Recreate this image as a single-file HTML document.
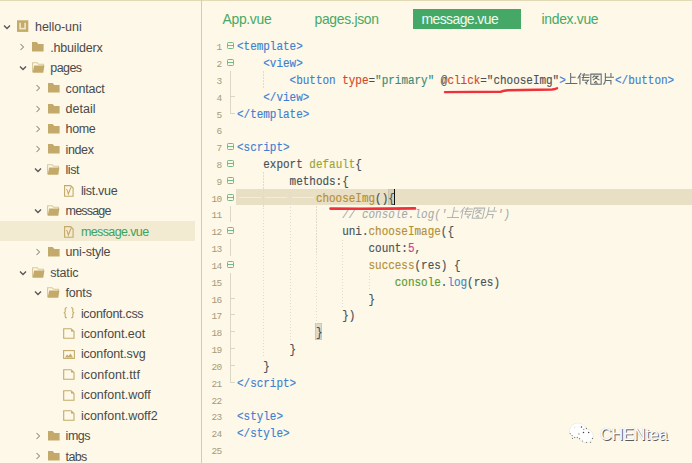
<!DOCTYPE html>
<html><head><meta charset="utf-8">
<style>
html,body{margin:0;padding:0;}
body{width:692px;height:463px;overflow:hidden;position:relative;background:#fdf8e7;}
.a{position:absolute;}
.st{position:absolute;font-family:"Liberation Sans",sans-serif;font-size:12.5px;line-height:20px;white-space:pre;letter-spacing:-0.2px;}
.ln{position:absolute;left:189.3px;width:32px;text-align:right;font-family:"Liberation Mono",monospace;font-size:9.5px;letter-spacing:-0.8px;line-height:16.83px;color:#a69a7c;}
.cl{position:absolute;-webkit-text-stroke:0.15px currentColor;font-family:"Liberation Mono",monospace;font-size:12.3px;line-height:16.83px;white-space:pre;transform:scaleX(0.8909);transform-origin:0 0;}
.it{font-style:italic;-webkit-text-stroke:0;}
.gd{position:absolute;width:1px;background:repeating-linear-gradient(to bottom,#e0dbca 0 1.5px,transparent 1.5px 3px);}
.tab{position:absolute;top:9px;height:20px;font-family:"Liberation Sans",sans-serif;font-size:13.9px;letter-spacing:-0.3px;line-height:20px;color:#48a866;white-space:pre;}
</style></head><body>
<div class="a" style="left:0;top:0;width:692px;height:1px;background:#e3d9b4"></div>
<div class="a" style="left:201px;top:0;width:1px;height:463px;background:#d8cda6"></div>
<div class="a" style="left:0;top:221px;width:195px;height:20px;background:#f2ead1"></div>
<div class="a" style="left:236px;top:189px;width:456px;height:16.4px;background:#e8dfc4"></div>
<div class="a" style="left:315px;top:323px;width:7px;height:17px;background:#dfdaca;border:1px solid #ccc8b6;box-sizing:border-box"></div>
<div class="a" style="left:387.8px;top:189px;width:7px;height:16.4px;background:#d8d1b7;border:1px solid #cdc7b0;box-sizing:border-box"></div>
<svg class="a" style="left:3.25px;top:23.20px" width="8" height="8"><path d="M1 2.5 L4 5.5 L7 2.5" fill="none" stroke="#555" stroke-width="1.3"/></svg>
<svg class="a" style="left:17.00px;top:20.20px" width="12" height="12"><rect x="0" y="0.3" width="11.3" height="11.6" fill="#c4aa6a"/><path d="M3.1 2.8 V8.7 H8.1 V2.8" fill="none" stroke="#efe4c4" stroke-width="1.7"/></svg>
<div class="st" style="left:35.00px;top:17.20px;color:#4a4a4a;letter-spacing:-0.075px">hello-uni</div>
<svg class="a" style="left:18.20px;top:43.15px" width="8" height="8"><path d="M2.5 1 L5.5 4 L2.5 7" fill="none" stroke="#928e7e" stroke-width="1.05"/></svg>
<svg class="a" style="left:32.00px;top:42.20px" width="12" height="10"><path d="M0 0 H4.6 L6.4 2 H11.6 V9.5 H0 Z" fill="#c4aa6a"/></svg>
<div class="st" style="left:50.30px;top:37.65px;color:#4a4a4a;letter-spacing:-0.200px">.hbuilderx</div>
<svg class="a" style="left:18.65px;top:64.10px" width="8" height="8"><path d="M1 2.5 L4 5.5 L7 2.5" fill="none" stroke="#555" stroke-width="1.3"/></svg>
<svg class="a" style="left:31.50px;top:62.10px" width="13" height="12"><path d="M0.6 10 V0.8 H5.2 L6.6 2.3 H11.4 V4" fill="none" stroke="#d9c99c" stroke-width="1.1"/><path d="M2.2 3.6 H12.4 L11.3 10.8 H0.6 Z" fill="#c4aa6a"/></svg>
<div class="st" style="left:50.30px;top:58.10px;color:#4a4a4a;letter-spacing:-0.575px">pages</div>
<svg class="a" style="left:33.70px;top:84.05px" width="8" height="8"><path d="M2.5 1 L5.5 4 L2.5 7" fill="none" stroke="#928e7e" stroke-width="1.05"/></svg>
<svg class="a" style="left:47.60px;top:83.10px" width="12" height="10"><path d="M0 0 H4.6 L6.4 2 H11.6 V9.5 H0 Z" fill="#c4aa6a"/></svg>
<div class="st" style="left:65.60px;top:78.55px;color:#4a4a4a;letter-spacing:-0.200px">contact</div>
<svg class="a" style="left:33.70px;top:104.50px" width="8" height="8"><path d="M2.5 1 L5.5 4 L2.5 7" fill="none" stroke="#928e7e" stroke-width="1.05"/></svg>
<svg class="a" style="left:47.60px;top:103.55px" width="12" height="10"><path d="M0 0 H4.6 L6.4 2 H11.6 V9.5 H0 Z" fill="#c4aa6a"/></svg>
<div class="st" style="left:65.60px;top:99.00px;color:#4a4a4a;letter-spacing:0.000px">detail</div>
<svg class="a" style="left:33.70px;top:124.95px" width="8" height="8"><path d="M2.5 1 L5.5 4 L2.5 7" fill="none" stroke="#928e7e" stroke-width="1.05"/></svg>
<svg class="a" style="left:47.60px;top:124.00px" width="12" height="10"><path d="M0 0 H4.6 L6.4 2 H11.6 V9.5 H0 Z" fill="#c4aa6a"/></svg>
<div class="st" style="left:65.60px;top:119.45px;color:#4a4a4a;letter-spacing:-0.350px">home</div>
<svg class="a" style="left:33.70px;top:145.40px" width="8" height="8"><path d="M2.5 1 L5.5 4 L2.5 7" fill="none" stroke="#928e7e" stroke-width="1.05"/></svg>
<svg class="a" style="left:47.60px;top:144.45px" width="12" height="10"><path d="M0 0 H4.6 L6.4 2 H11.6 V9.5 H0 Z" fill="#c4aa6a"/></svg>
<div class="st" style="left:65.60px;top:139.90px;color:#4a4a4a;letter-spacing:-0.400px">index</div>
<svg class="a" style="left:34.05px;top:166.35px" width="8" height="8"><path d="M1 2.5 L4 5.5 L7 2.5" fill="none" stroke="#555" stroke-width="1.3"/></svg>
<svg class="a" style="left:47.10px;top:164.35px" width="13" height="12"><path d="M0.6 10 V0.8 H5.2 L6.6 2.3 H11.4 V4" fill="none" stroke="#d9c99c" stroke-width="1.1"/><path d="M2.2 3.6 H12.4 L11.3 10.8 H0.6 Z" fill="#c4aa6a"/></svg>
<div class="st" style="left:65.60px;top:160.35px;color:#4a4a4a;letter-spacing:-0.500px">list</div>
<svg class="a" style="left:64.00px;top:184.70px" width="11" height="13"><path d="M0.6 0.6 H6.6 L9.1 3.1 V11.2 H0.6 Z" fill="none" stroke="#c4aa6a" stroke-width="1.1"/><path d="M6.6 0.6 L9.1 3.1 H6.6 Z" fill="#c4aa6a" fill-opacity="0.6"/><path d="M2.1 4.2 Q3.3 4 4.3 9 L6.8 2.8" fill="none" stroke="#c4aa6a" stroke-width="1.1"/></svg>
<div class="st" style="left:80.90px;top:180.80px;color:#4a4a4a;letter-spacing:-0.310px">list.vue</div>
<svg class="a" style="left:34.05px;top:207.25px" width="8" height="8"><path d="M1 2.5 L4 5.5 L7 2.5" fill="none" stroke="#555" stroke-width="1.3"/></svg>
<svg class="a" style="left:47.10px;top:205.25px" width="13" height="12"><path d="M0.6 10 V0.8 H5.2 L6.6 2.3 H11.4 V4" fill="none" stroke="#d9c99c" stroke-width="1.1"/><path d="M2.2 3.6 H12.4 L11.3 10.8 H0.6 Z" fill="#c4aa6a"/></svg>
<div class="st" style="left:65.60px;top:201.25px;color:#4a4a4a;letter-spacing:-0.830px">message</div>
<svg class="a" style="left:64.00px;top:225.60px" width="11" height="13"><path d="M0.6 0.6 H6.6 L9.1 3.1 V11.2 H0.6 Z" fill="none" stroke="#c4aa6a" stroke-width="1.1"/><path d="M6.6 0.6 L9.1 3.1 H6.6 Z" fill="#c4aa6a" fill-opacity="0.6"/><path d="M2.1 4.2 Q3.3 4 4.3 9 L6.8 2.8" fill="none" stroke="#c4aa6a" stroke-width="1.1"/></svg>
<div class="st" style="left:80.90px;top:221.70px;color:#3da35d;letter-spacing:-0.610px">message.vue</div>
<svg class="a" style="left:33.70px;top:247.65px" width="8" height="8"><path d="M2.5 1 L5.5 4 L2.5 7" fill="none" stroke="#928e7e" stroke-width="1.05"/></svg>
<svg class="a" style="left:47.60px;top:246.70px" width="12" height="10"><path d="M0 0 H4.6 L6.4 2 H11.6 V9.5 H0 Z" fill="#c4aa6a"/></svg>
<div class="st" style="left:65.60px;top:242.15px;color:#4a4a4a;letter-spacing:-0.200px">uni-style</div>
<svg class="a" style="left:18.65px;top:268.60px" width="8" height="8"><path d="M1 2.5 L4 5.5 L7 2.5" fill="none" stroke="#555" stroke-width="1.3"/></svg>
<svg class="a" style="left:31.50px;top:266.60px" width="13" height="12"><path d="M0.6 10 V0.8 H5.2 L6.6 2.3 H11.4 V4" fill="none" stroke="#d9c99c" stroke-width="1.1"/><path d="M2.2 3.6 H12.4 L11.3 10.8 H0.6 Z" fill="#c4aa6a"/></svg>
<div class="st" style="left:50.30px;top:262.60px;color:#4a4a4a;letter-spacing:-0.200px">static</div>
<svg class="a" style="left:34.05px;top:289.05px" width="8" height="8"><path d="M1 2.5 L4 5.5 L7 2.5" fill="none" stroke="#555" stroke-width="1.3"/></svg>
<svg class="a" style="left:47.10px;top:287.05px" width="13" height="12"><path d="M0.6 10 V0.8 H5.2 L6.6 2.3 H11.4 V4" fill="none" stroke="#d9c99c" stroke-width="1.1"/><path d="M2.2 3.6 H12.4 L11.3 10.8 H0.6 Z" fill="#c4aa6a"/></svg>
<div class="st" style="left:65.60px;top:283.05px;color:#4a4a4a;letter-spacing:-0.200px">fonts</div>
<svg class="a" style="left:63.20px;top:306.50px" width="12" height="12"><path d="M4 0.8 H3.2 Q2.2 0.8 2.2 1.8 V4.6 Q2.2 5.6 0.8 5.8 Q2.2 6 2.2 7 V9.8 Q2.2 10.8 3.2 10.8 H4 M8 0.8 H8.8 Q9.8 0.8 9.8 1.8 V4.6 Q9.8 5.6 11.2 5.8 Q9.8 6 9.8 7 V9.8 Q9.8 10.8 8.8 10.8 H8" fill="none" stroke="#c4aa6a" stroke-width="1.1"/></svg>
<div class="st" style="left:80.90px;top:303.50px;color:#4a4a4a;letter-spacing:-0.300px">iconfont.css</div>
<svg class="a" style="left:63.20px;top:328.45px" width="12" height="11"><path d="M0.7 0.7 H8 L11 3.5 V10.3 H0.7 Z" fill="none" stroke="#c4aa6a" stroke-width="1.1"/><path d="M8 0.7 L11 3.5 H8 Z" fill="#c4aa6a"/></svg>
<div class="st" style="left:80.90px;top:323.95px;color:#4a4a4a;letter-spacing:-0.030px">iconfont.eot</div>
<svg class="a" style="left:63.20px;top:349.90px" width="12" height="9"><rect x="0.6" y="0.6" width="10.8" height="7.8" fill="none" stroke="#c4aa6a" stroke-width="1.1"/><path d="M2 7.5 L4 4.5 L5.5 6 L7.5 3.5 L10 7.5 Z" fill="#c4aa6a"/></svg>
<div class="st" style="left:80.90px;top:344.40px;color:#4a4a4a;letter-spacing:-0.170px">iconfont.svg</div>
<svg class="a" style="left:63.20px;top:369.35px" width="12" height="11"><path d="M0.7 0.7 H8 L11 3.5 V10.3 H0.7 Z" fill="none" stroke="#c4aa6a" stroke-width="1.1"/><path d="M8 0.7 L11 3.5 H8 Z" fill="#c4aa6a"/></svg>
<div class="st" style="left:80.90px;top:364.85px;color:#4a4a4a;letter-spacing:0.120px">iconfont.ttf</div>
<svg class="a" style="left:63.20px;top:389.80px" width="12" height="11"><path d="M0.7 0.7 H8 L11 3.5 V10.3 H0.7 Z" fill="none" stroke="#c4aa6a" stroke-width="1.1"/><path d="M8 0.7 L11 3.5 H8 Z" fill="#c4aa6a"/></svg>
<div class="st" style="left:80.90px;top:385.30px;color:#4a4a4a;letter-spacing:0.000px">iconfont.woff</div>
<svg class="a" style="left:63.20px;top:410.25px" width="12" height="11"><path d="M0.7 0.7 H8 L11 3.5 V10.3 H0.7 Z" fill="none" stroke="#c4aa6a" stroke-width="1.1"/><path d="M8 0.7 L11 3.5 H8 Z" fill="#c4aa6a"/></svg>
<div class="st" style="left:80.90px;top:405.75px;color:#4a4a4a;letter-spacing:0.000px">iconfont.woff2</div>
<svg class="a" style="left:33.70px;top:431.70px" width="8" height="8"><path d="M2.5 1 L5.5 4 L2.5 7" fill="none" stroke="#928e7e" stroke-width="1.05"/></svg>
<svg class="a" style="left:47.60px;top:430.75px" width="12" height="10"><path d="M0 0 H4.6 L6.4 2 H11.6 V9.5 H0 Z" fill="#c4aa6a"/></svg>
<div class="st" style="left:65.60px;top:426.20px;color:#4a4a4a;letter-spacing:-0.470px">imgs</div>
<svg class="a" style="left:33.70px;top:452.15px" width="8" height="8"><path d="M2.5 1 L5.5 4 L2.5 7" fill="none" stroke="#928e7e" stroke-width="1.05"/></svg>
<svg class="a" style="left:47.60px;top:451.20px" width="12" height="10"><path d="M0 0 H4.6 L6.4 2 H11.6 V9.5 H0 Z" fill="#c4aa6a"/></svg>
<div class="st" style="left:65.60px;top:446.65px;color:#4a4a4a;letter-spacing:-0.630px">tabs</div>
<div class="tab" style="left:222.5px">App.vue</div>
<div class="tab" style="left:314.5px">pages.json</div>
<div class="a" style="left:412.5px;top:9px;width:108.5px;height:20px;background:#46a866"></div>
<div class="tab" style="left:421.5px;top:9px;color:#f4faf2;letter-spacing:-0.55px">message.vue</div>
<div class="tab" style="left:541.5px">index.vue</div>
<div class="gd" style="left:263.30px;top:71.00px;height:17.00px"></div>
<div class="gd" style="left:263.30px;top:172.00px;height:185.00px"></div>
<div class="gd" style="left:289.60px;top:189.00px;height:152.00px"></div>
<div class="gd" style="left:315.90px;top:206.00px;height:118.00px"></div>
<div class="gd" style="left:342.20px;top:240.00px;height:67.00px"></div>
<div class="gd" style="left:368.50px;top:273.00px;height:17.00px"></div>
<div class="a" style="left:238.5px;top:197px;width:22.5px;height:1px;background:#f2ecd9"></div><div class="a" style="left:265px;top:197px;width:22px;height:1px;background:#f2ecd9"></div><div class="a" style="left:291.5px;top:197px;width:22px;height:1px;background:#f2ecd9"></div>
<svg class="a" style="left:227px;top:42px" width="7" height="7"><rect x="0.5" y="0.5" width="6" height="6" rx="0.8" fill="none" stroke="#74ba88" stroke-width="1"/><path d="M1 3.5 H6" stroke="#74ba88" stroke-width="1"/></svg>
<svg class="a" style="left:227px;top:59px" width="7" height="7"><rect x="0.5" y="0.5" width="6" height="6" rx="0.8" fill="none" stroke="#74ba88" stroke-width="1"/><path d="M1 3.5 H6" stroke="#74ba88" stroke-width="1"/></svg>
<svg class="a" style="left:227px;top:143px" width="7" height="7"><rect x="0.5" y="0.5" width="6" height="6" rx="0.8" fill="none" stroke="#74ba88" stroke-width="1"/><path d="M1 3.5 H6" stroke="#74ba88" stroke-width="1"/></svg>
<svg class="a" style="left:227px;top:160px" width="7" height="7"><rect x="0.5" y="0.5" width="6" height="6" rx="0.8" fill="none" stroke="#74ba88" stroke-width="1"/><path d="M1 3.5 H6" stroke="#74ba88" stroke-width="1"/></svg>
<svg class="a" style="left:227px;top:177px" width="7" height="7"><rect x="0.5" y="0.5" width="6" height="6" rx="0.8" fill="none" stroke="#74ba88" stroke-width="1"/><path d="M1 3.5 H6" stroke="#74ba88" stroke-width="1"/></svg>
<svg class="a" style="left:227px;top:194px" width="7" height="7"><rect x="0.5" y="0.5" width="6" height="6" rx="0.8" fill="none" stroke="#74ba88" stroke-width="1"/><path d="M1 3.5 H6" stroke="#74ba88" stroke-width="1"/></svg>
<svg class="a" style="left:227px;top:227px" width="7" height="7"><rect x="0.5" y="0.5" width="6" height="6" rx="0.8" fill="none" stroke="#74ba88" stroke-width="1"/><path d="M1 3.5 H6" stroke="#74ba88" stroke-width="1"/></svg>
<svg class="a" style="left:227px;top:261px" width="7" height="7"><rect x="0.5" y="0.5" width="6" height="6" rx="0.8" fill="none" stroke="#74ba88" stroke-width="1"/><path d="M1 3.5 H6" stroke="#74ba88" stroke-width="1"/></svg>
<div class="a" style="left:230px;top:71px;width:1px;height:43px;background:#dcd7c4"></div>
<div class="a" style="left:230px;top:206px;width:1px;height:16px;background:#dcd7c4"></div>
<div class="a" style="left:230px;top:239px;width:1px;height:17px;background:#dcd7c4"></div>
<div class="a" style="left:230px;top:273px;width:1px;height:110px;background:#dcd7c4"></div>
<div class="a" style="left:230px;top:96px;width:5px;height:1px;background:#dcd7c4"></div>
<div class="a" style="left:230px;top:298px;width:5px;height:1px;background:#dcd7c4"></div>
<div class="a" style="left:230px;top:314px;width:5px;height:1px;background:#dcd7c4"></div>
<div class="a" style="left:230px;top:331px;width:5px;height:1px;background:#dcd7c4"></div>
<div class="a" style="left:230px;top:348px;width:5px;height:1px;background:#dcd7c4"></div>
<div class="a" style="left:230px;top:365px;width:5px;height:1px;background:#dcd7c4"></div>
<div class="a" style="left:230px;top:113px;width:5px;height:1px;background:#dcd7c4"></div>
<div class="a" style="left:230px;top:382px;width:5px;height:1px;background:#dcd7c4"></div>
<div class="ln" style="top:40.00px">1</div>
<div class="cl" style="left:236.70px;top:39.00px"><span style="color:#3d7fd2">&lt;template&gt;</span></div>
<div class="ln" style="top:57.00px">2</div>
<div class="cl" style="left:236.70px;top:56.00px"><span style="color:#3d7fd2">    &lt;view&gt;</span></div>
<div class="ln" style="top:74.00px">3</div>
<div class="cl" style="left:236.70px;top:73.00px"><span style="color:#3d7fd2">        &lt;button</span><span style="color:#d2472c"> type</span><span style="color:#485157">=</span><span style="color:#3a8b78">"primary"</span><span style="color:#485157"> @</span><span style="color:#d2472c">click</span><span style="color:#485157">="chooseImg"</span><span style="color:#3d7fd2">&gt;</span></div>
<div class="cl" style="left:615.45px;top:73.00px"><span style="color:#3d7fd2">&lt;/button&gt;</span></div>
<div class="ln" style="top:91.00px">4</div>
<div class="cl" style="left:236.70px;top:90.00px"><span style="color:#3d7fd2">    &lt;/view&gt;</span></div>
<div class="ln" style="top:108.00px">5</div>
<div class="cl" style="left:236.70px;top:107.00px"><span style="color:#3d7fd2">&lt;/template&gt;</span></div>
<div class="ln" style="top:124.00px">6</div>
<div class="ln" style="top:141.00px">7</div>
<div class="cl" style="left:236.70px;top:140.00px"><span style="color:#3d7fd2">&lt;script&gt;</span></div>
<div class="ln" style="top:158.00px">8</div>
<div class="cl" style="left:236.70px;top:157.00px"><span style="color:#485157">    export </span><span style="color:#9aa338">default</span><span style="color:#485157">{</span></div>
<div class="ln" style="top:175.00px">9</div>
<div class="cl" style="left:236.70px;top:174.00px"><span style="color:#485157">        methods:{</span></div>
<div class="ln" style="top:192.00px">10</div>
<div class="cl" style="left:236.70px;top:191.00px"><span style="color:#b48e38">            chooseImg</span><span style="color:#485157">(){</span></div>
<div class="ln" style="top:208.00px">11</div>
<div class="cl" style="left:236.70px;top:207.00px"><span class="it" style="color:#a3a7a8">                // console.log('</span></div>
<div class="cl" style="left:497.10px;top:207.00px"><span class="it" style="color:#a3a7a8">')</span></div>
<div class="ln" style="top:225.00px">12</div>
<div class="cl" style="left:236.70px;top:224.00px"><span style="color:#485157">                uni.</span><span style="color:#b48e38">chooseImage</span><span style="color:#485157">({</span></div>
<div class="ln" style="top:242.00px">13</div>
<div class="cl" style="left:236.70px;top:241.00px"><span style="color:#485157">                    count:</span><span style="color:#d0428c">5</span><span style="color:#485157">,</span></div>
<div class="ln" style="top:259.00px">14</div>
<div class="cl" style="left:236.70px;top:258.00px"><span style="color:#b48e38">                    success</span><span style="color:#485157">(res) {</span></div>
<div class="ln" style="top:276.00px">15</div>
<div class="cl" style="left:236.70px;top:275.00px"><span style="color:#5a9a2c">                        console</span><span style="color:#485157">.</span><span style="color:#3a8ad0">log</span><span style="color:#485157">(res)</span></div>
<div class="ln" style="top:293.00px">16</div>
<div class="cl" style="left:236.70px;top:292.00px"><span style="color:#485157">                    }</span></div>
<div class="ln" style="top:309.00px">17</div>
<div class="cl" style="left:236.70px;top:308.00px"><span style="color:#485157">                })</span></div>
<div class="ln" style="top:326.00px">18</div>
<div class="cl" style="left:236.70px;top:325.00px"><span style="color:#485157">            }</span></div>
<div class="ln" style="top:343.00px">19</div>
<div class="cl" style="left:236.70px;top:342.00px"><span style="color:#485157">        }</span></div>
<div class="ln" style="top:360.00px">20</div>
<div class="cl" style="left:236.70px;top:359.00px"><span style="color:#485157">    }</span></div>
<div class="ln" style="top:377.00px">21</div>
<div class="cl" style="left:236.70px;top:376.00px"><span style="color:#3d7fd2">&lt;/script&gt;</span></div>
<div class="ln" style="top:394.00px">22</div>
<div class="ln" style="top:410.00px">23</div>
<div class="cl" style="left:236.70px;top:409.00px"><span style="color:#3d7fd2">&lt;style&gt;</span></div>
<div class="ln" style="top:427.00px">24</div>
<div class="cl" style="left:236.70px;top:426.00px"><span style="color:#3d7fd2">&lt;/style&gt;</span></div>
<div class="ln" style="top:444.00px">25</div>
<svg class="a" style="left:565.45px;top:72.00px" width="54" height="14"><g  fill="none" stroke="#485157" stroke-opacity="0.85" stroke-width="1.05"><path transform="translate(0.00,1)" d="M5.65 0 V10.4 M5.65 4.3 H10.65 M0.35 10.4 H12.35"/><path transform="translate(12.50,1)" d="M3.65 0 L0.25 5.5 M2.45 3 V11.5 M4.25 1.9 H11.95 M4.25 4.5 H11.95 M6.8 0 L5.2 7.3 H10.8 L8.2 10.5 M7.5 9.2 L9.8 11.3"/><path transform="translate(25.00,1)" d="M0.8 1.1 H11.2 V11.3 H0.8 Z M4.5 2.3 L2.5 4.8 M4.3 3.2 H8 L3 7.2 M5 4.6 L9.4 7 M4.8 8.2 L6.8 8.8 M4 9.6 L7.6 10.3"/><path transform="translate(37.50,1)" d="M2.85 0 V7 Q2.85 10 0.95 11.5 M8.45 0 V4.15 M2.85 4.15 H11.45 M2.85 7.4 H8.45 V11.5"/></g></svg>
<svg class="a" style="left:447.10px;top:206.00px" width="54" height="14"><g transform="translate(2,0) skewX(-12)" fill="none" stroke="#a3a7a8" stroke-opacity="0.85" stroke-width="1.05"><path transform="translate(0.00,1)" d="M5.65 0 V10.4 M5.65 4.3 H10.65 M0.35 10.4 H12.35"/><path transform="translate(12.50,1)" d="M3.65 0 L0.25 5.5 M2.45 3 V11.5 M4.25 1.9 H11.95 M4.25 4.5 H11.95 M6.8 0 L5.2 7.3 H10.8 L8.2 10.5 M7.5 9.2 L9.8 11.3"/><path transform="translate(25.00,1)" d="M0.8 1.1 H11.2 V11.3 H0.8 Z M4.5 2.3 L2.5 4.8 M4.3 3.2 H8 L3 7.2 M5 4.6 L9.4 7 M4.8 8.2 L6.8 8.8 M4 9.6 L7.6 10.3"/><path transform="translate(37.50,1)" d="M2.85 0 V7 Q2.85 10 0.95 11.5 M8.45 0 V4.15 M2.85 4.15 H11.45 M2.85 7.4 H8.45 V11.5"/></g></svg>
<div class="a" style="left:393.5px;top:188.8px;width:1.4px;height:16.5px;background:#111"></div>
<svg class="a" style="left:0;top:0" width="692" height="463"><path d="M445 92.1 L501 91.7 Q504 90.3 508 90.2 L552 89.5 Q555 89.3 557 88.2" fill="none" stroke="#f0303a" stroke-width="2.4" stroke-linecap="round"/><path d="M330.5 208.6 Q370 208.9 415 208.4" fill="none" stroke="#f0303a" stroke-width="2.6" stroke-linecap="round"/></svg>
<svg class="a" style="left:565px;top:418px" width="32" height="28"><g fill="#fff" stroke="#e6e1d2" stroke-width="0.6"><ellipse cx="13" cy="12.8" rx="8.3" ry="7.6"/><ellipse cx="21" cy="17.9" rx="7.3" ry="6.9"/></g><ellipse cx="13" cy="12.8" rx="8" ry="7.3" fill="#fff"/><g fill="#777"><circle cx="5.2" cy="15.6" r="0.6"/><circle cx="7.1" cy="17.5" r="0.6"/><circle cx="7.5" cy="20.4" r="0.6"/><circle cx="9.7" cy="19.4" r="0.6"/><circle cx="12.3" cy="19.4" r="0.6"/><circle cx="13.9" cy="15.9" r="0.6"/><circle cx="14.6" cy="20.7" r="0.6"/><circle cx="17.5" cy="23" r="0.6"/><circle cx="21.4" cy="24.3" r="0.6"/><circle cx="25.6" cy="24.3" r="0.6"/><circle cx="27.5" cy="20.4" r="0.6"/><circle cx="18.8" cy="11.3" r="0.6"/><circle cx="21.4" cy="10.4" r="0.6"/></g><g fill="#444"><circle cx="16.5" cy="9.1" r="0.75"/><circle cx="18.5" cy="14.6" r="0.75"/><circle cx="23.7" cy="14.6" r="0.75"/></g><circle cx="9.7" cy="9.4" r="0.7" fill="#ddd"/></svg>
<div class="a" style="left:600px;top:425.9px;font-family:'Liberation Sans',sans-serif;font-size:16px;line-height:18px;color:#fff;-webkit-text-stroke:0.2px #fff;text-shadow:1px 1px 0.6px #5a5a5a, 0 0 0.7px #aaa">CHENtea</div>
</body></html>
